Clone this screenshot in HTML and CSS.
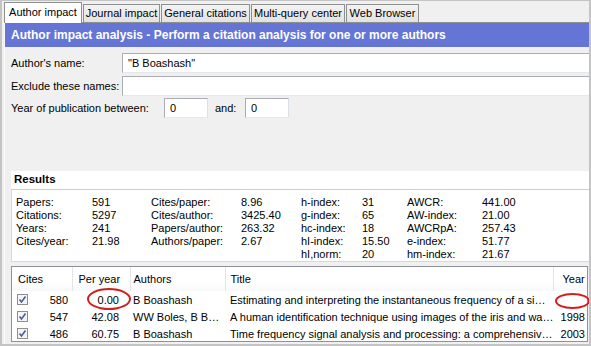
FILE: index.html
```html
<!DOCTYPE html>
<html lang="en">
<head>
    <meta charset="UTF-8">
    <title>Author impact</title>
    <link rel="stylesheet" href="styles.css">
</head>
<body>

    <div class="app">
        <!-- Tabs -->
        <div class="tabs">
            <div class="tab active tab-author">Author impact</div>
            <div class="tab tab-journal">Journal impact</div>
            <div class="tab tab-general">General citations</div>
            <div class="tab tab-multi">Multi-query center</div>
            <div class="tab tab-web">Web Browser</div>
        </div>

        <div class="panel">
            <div class="banner">Author impact analysis - Perform a citation analysis for one or more authors</div>

            <!-- Query form -->
            <div class="form">
                <div class="field">
                    <label class="field-label">Author's name:</label>
                    <input type="text" class="text-box" value='"B Boashash"'>
                </div>
                <div class="field">
                    <label class="field-label">Exclude these names:</label>
                    <input type="text" class="text-box" value="">
                </div>
                <div class="field field-year">
                    <label class="field-label year-label">Year of publication between:</label>
                    <input type="text" class="text-box year-box" value="0">
                    <span class="and-label">and:</span>
                    <input type="text" class="text-box year-box" value="0">
                </div>
            </div>

            <!-- Results summary -->
            <div class="results">
                <div class="results-head">Results</div>
                <div class="stats">
                    <span>Papers:</span><span>591</span>
                    <span>Cites/paper:</span><span>8.96</span>
                    <span>h-index:</span><span>31</span>
                    <span>AWCR:</span><span>441.00</span>

                    <span>Citations:</span><span>5297</span>
                    <span>Cites/author:</span><span>3425.40</span>
                    <span>g-index:</span><span>65</span>
                    <span>AW-index:</span><span>21.00</span>

                    <span>Years:</span><span>241</span>
                    <span>Papers/author:</span><span>263.32</span>
                    <span>hc-index:</span><span>18</span>
                    <span>AWCRpA:</span><span>257.43</span>

                    <span>Cites/year:</span><span>21.98</span>
                    <span>Authors/paper:</span><span>2.67</span>
                    <span>hI-index:</span><span>15.50</span>
                    <span>e-index:</span><span>51.77</span>

                    <span class="skip">hI,norm:</span><span>20</span>
                    <span>hm-index:</span><span>21.67</span>
                </div>
            </div>

            <!-- Paper list -->
            <div class="grid">
                <div class="grid-inner">
                    <table class="papers">
                        <colgroup>
                            <col class="c-cites">
                            <col class="c-peryear">
                            <col class="c-authors">
                            <col class="c-title">
                            <col class="c-year">
                        </colgroup>
                        <thead>
                            <tr>
                                <th class="h-cites">Cites</th>
                                <th class="h-peryear">Per year</th>
                                <th class="h-authors">Authors</th>
                                <th class="h-title">Title</th>
                                <th class="h-year">Year</th>
                            </tr>
                        </thead>
                        <tbody>
                            <tr>
                                <td class="cites"><span class="check"><svg width="11" height="11" viewBox="0 0 11 11"><rect x="0.5" y="0.5" width="10" height="10" fill="#f4f4f4" stroke="#8f8f8f"/><path d="M2.5 5.5 L4.5 8 L8.5 2.5" fill="none" stroke="#4a5e96" stroke-width="1.6"/></svg></span><span>580</span></td>
                                <td class="peryear">0.00</td>
                                <td class="authors">B Boashash</td>
                                <td class="title">Estimating and interpreting the instantaneous frequency of a si…</td>
                                <td class="year"></td>
                            </tr>
                            <tr>
                                <td class="cites"><span class="check"><svg width="11" height="11" viewBox="0 0 11 11"><rect x="0.5" y="0.5" width="10" height="10" fill="#f4f4f4" stroke="#8f8f8f"/><path d="M2.5 5.5 L4.5 8 L8.5 2.5" fill="none" stroke="#4a5e96" stroke-width="1.6"/></svg></span><span>547</span></td>
                                <td class="peryear">42.08</td>
                                <td class="authors">WW Boles, B B…</td>
                                <td class="title">A human identification technique using images of the iris and wa…</td>
                                <td class="year">1998</td>
                            </tr>
                            <tr>
                                <td class="cites"><span class="check"><svg width="11" height="11" viewBox="0 0 11 11"><rect x="0.5" y="0.5" width="10" height="10" fill="#f4f4f4" stroke="#8f8f8f"/><path d="M2.5 5.5 L4.5 8 L8.5 2.5" fill="none" stroke="#4a5e96" stroke-width="1.6"/></svg></span><span>486</span></td>
                                <td class="peryear">60.75</td>
                                <td class="authors">B Boashash</td>
                                <td class="title">Time frequency signal analysis and processing: a comprehensiv…</td>
                                <td class="year">2003</td>
                            </tr>
                        </tbody>
                    </table>
                </div>
                <!-- red annotation marks -->
                <span class="mark mark-peryear"></span>
                <span class="mark mark-year"></span>
            </div>
        </div>
    </div>

</body>
</html>
```

FILE: styles.css
```css
* {
    box-sizing: border-box;
}

body {
    margin: 0;
    font-family: "Liberation Sans", Arial, sans-serif;
    font-size: 11px;
    color: #000;
}

.app {
    width: 591px;
    height: 346px;
    background: #f0f0f0;
    border: 2px solid #c4c4c4;
    border-top: 1px solid #c4c4c4;
    padding-left: 2px;
    display: flex;
    flex-direction: column;
    overflow: hidden;
}

/* Tabs */
.tabs {
    display: flex;
    align-items: flex-end;
    height: 21px;
    position: relative;
    z-index: 1;
}

.tab {
    height: 18px;
    line-height: 17px;
    text-align: center;
    white-space: nowrap;
    border: 1px solid #8e8f8f;
    border-bottom: none;
    background: linear-gradient(#f3f3f3, #e2e2e2);
    margin-left: 1px;
}

.tab.active {
    height: 21px;
    line-height: 19px;
    margin-bottom: -1px;
    margin-left: 0;
    background: #fff;
}

.tab-author { width: 78px; }
.tab-journal { width: 77px; }
.tab-general { width: 89px; }
.tab-multi { width: 94px; }
.tab-web { width: 73px; }

/* Panel */
.panel {
    flex: 1;
    display: flex;
    flex-direction: column;
    border-top: 1px solid #8e8f8f;
    border-left: 1px solid #fafafa;
    min-height: 0;
}

.banner {
    height: 24px;
    line-height: 24px;
    background: #6475d6;
    color: #fff;
    font-weight: bold;
    font-size: 12px;
    padding-left: 6px;
    white-space: nowrap;
}

.form {
    padding: 6px 0 0 6px;
}

.field {
    display: flex;
    align-items: center;
    height: 20px;
    margin-bottom: 3px;
}

.field-year {
    margin-top: -1px;
    margin-bottom: 0;
}

.field-label {
    width: 111px;
    flex: none;
}

.year-label {
    width: 153px;
}

.text-box {
    flex: 1;
    height: 20px;
    border: 1px solid #abadb3;
    border-bottom-color: #e3e9ef;
    border-right: none;
    background: #fff;
    padding: 0 5px;
    font-family: inherit;
    font-size: 11px;
    color: #000;
    outline: none;
}

.year-box {
    flex: none;
    width: 44px;
    border-right: 1px solid #dbdfe6;
}

.and-label {
    width: 37px;
    padding-left: 7px;
}

/* Results */
.results {
    margin: 53px 0 0 6px;
    background: #fff;
}

.results-head {
    height: 19px;
    line-height: 16px;
    font-weight: bold;
    font-size: 11.5px;
    padding-left: 3px;
    border-bottom: 1px solid #cdcdcd;
}

.stats {
    display: grid;
    grid-template-columns: 76px 59px 90px 60px 61px 45px 75px 1fr;
    grid-auto-rows: 13px;
    line-height: 13px;
    padding: 6px 0 0 4px;
    height: 72px;
    border-left: 1px solid #d8d8d8;
    border-bottom: 1px solid #d8d8d8;
}

.stats .skip {
    grid-column: 5;
}

/* Paper list */
.grid {
    flex: 1;
    position: relative;
    margin: 4px 1px 2px 6px;
    border: 1px solid #8e9198;
    background: #fff;
    min-height: 0;
}

.grid-inner {
    height: 100%;
    overflow: hidden;
}

.papers {
    width: 100%;
    table-layout: fixed;
    border-collapse: collapse;
}

.c-cites { width: 60px; }
.c-peryear { width: 58px; }
.c-authors { width: 95px; }
.c-title { width: 328px; }
.c-year { width: 34px; }

.papers th {
    height: 24px;
    font-weight: normal;
    text-align: left;
    white-space: nowrap;
    background: linear-gradient(#ffffff 60%, #f7f8fa);
    border-right: 1px solid #e3e5e8;
    padding: 0;
}

.papers th:last-child {
    border-right: none;
}

.h-cites { padding-left: 6px !important; }
.h-peryear { padding-left: 6px !important; }
.h-authors { padding-left: 3px !important; }
.h-title { padding-left: 5px !important; }
.h-year { padding-left: 9px !important; }

.papers td {
    height: 17px;
    padding: 0;
    white-space: nowrap;
    overflow: hidden;
}

.cites {
    display: flex;
    align-items: center;
    justify-content: space-between;
    padding: 0 4px 0 5px !important;
}

.check {
    display: flex;
}

.peryear {
    text-align: right;
    padding-right: 11px !important;
}

.authors {
    padding-left: 3px !important;
}

.title {
    padding-left: 5px !important;
}

.year {
    text-align: right;
    padding-right: 2px !important;
}

.mark {
    position: absolute;
    border: 2px solid #d22020;
    border-radius: 50%;
}

.mark-peryear {
    left: 75px;
    top: 21px;
    width: 44px;
    height: 22px;
}

.mark-year {
    left: 543px;
    top: 26px;
    width: 35px;
    height: 16px;
}
```
